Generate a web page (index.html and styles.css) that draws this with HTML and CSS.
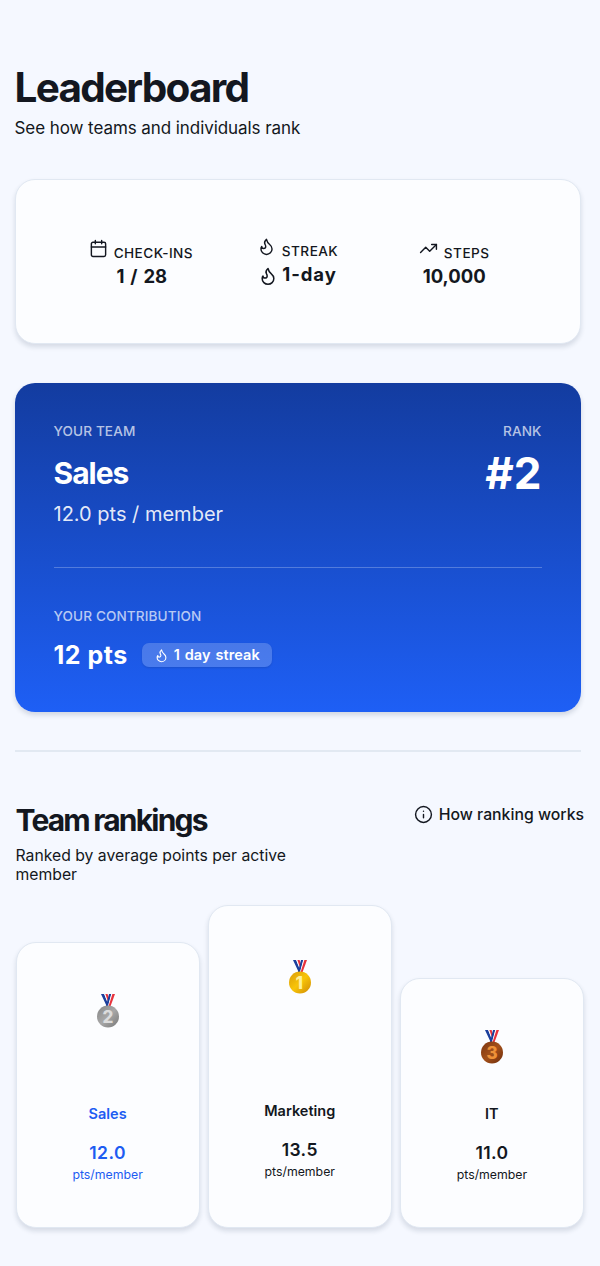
FILE: index.html
```
<!DOCTYPE html>
<html lang="en">
<head>
    <meta charset="UTF-8">
    <meta name="viewport" content="width=device-width, initial-scale=1.0">
    <title>Leaderboard</title>
    <link rel="stylesheet" href="styles.css">
</head>
<body>
    <!-- Shared icons -->
    <svg class="sprite" width="0" height="0">
        <symbol id="flame" viewBox="0 0 24 24">
            <path d="M8.5 14.5A2.5 2.5 0 0 0 11 12c0-1.38-.5-2-1-3-1.072-2.143-.224-4.054 2-6 .5 2.5 2 4.9 4 6.5 2 1.6 3 3.5 3 5.5a7 7 0 1 1-14 0c0-1.153.433-2.294 1-3a2.5 2.5 0 0 0 2.5 2.5z"/>
        </symbol>
        <symbol id="ribbon" viewBox="0 0 24 36">
            <path d="M5 1h3.2l5 12h-2.6z" fill="#1c3f9c"/>
            <path d="M8.2 1h1.4l3.2 8-.8 2z" fill="#ffffff"/>
            <path d="M9.4 1h2.2l1.2 4-1 3z" fill="#e8323c"/>
            <path d="M13 1h2.6l-3.4 12H10z" fill="#1c3f9c"/>
            <path d="M15.2 1h1.4l-3.4 12h-1.2z" fill="#ffffff"/>
            <path d="M16.4 1H19l-4.4 12h-2z" fill="#e8323c"/>
        </symbol>
    </svg>

    <header class="page-header">
        <h1>Leaderboard</h1>
        <p>See how teams and individuals rank</p>
    </header>

    <section class="card stats">
        <div class="stat">
            <div class="stat-label">
                <svg class="icon" viewBox="0 0 24 24"><path d="M8 2v4M16 2v4M3 10h18"/><rect x="3" y="4" width="18" height="18" rx="2"/></svg>
                <span>CHECK-INS</span>
            </div>
            <div class="stat-value spaced">1 / 28</div>
        </div>
        <div class="stat">
            <div class="stat-label">
                <svg class="icon"><use href="#flame"/></svg>
                <span>STREAK</span>
            </div>
            <div class="stat-value with-icon">
                <svg class="icon"><use href="#flame"/></svg>
                <span>1-day</span>
            </div>
        </div>
        <div class="stat">
            <div class="stat-label">
                <svg class="icon" viewBox="0 0 24 24"><path d="M16 7h6v6"/><path d="m22 7-8.5 8.5-5-5L2 17"/></svg>
                <span>STEPS</span>
            </div>
            <div class="stat-value">10,000</div>
        </div>
    </section>

    <section class="team-card">
        <div class="team-top">
            <div>
                <div class="label">YOUR TEAM</div>
                <h2 class="team-name">Sales</h2>
                <div class="team-points">12.0 pts / member</div>
            </div>
            <div class="team-rank">
                <div class="label">RANK</div>
                <div class="rank-number">#2</div>
            </div>
        </div>
        <div class="team-bottom">
            <div class="label">YOUR CONTRIBUTION</div>
            <div class="contribution">
                <span class="points">12 pts</span>
                <span class="badge">
                    <svg class="icon"><use href="#flame"/></svg>
                    <span>1 day streak</span>
                </span>
            </div>
        </div>
    </section>

    <hr class="separator">

    <section class="rankings">
        <div class="rankings-header">
            <div class="rankings-title">
                <h2>Team rankings</h2>
                <p>Ranked by average points per active member</p>
            </div>
            <a class="how-link">
                <svg class="icon" viewBox="0 0 24 24"><circle cx="12" cy="12" r="10"/><path d="M12 16v-4M12 8h.01"/></svg>
                <span>How ranking works</span>
            </a>
        </div>

        <div class="podium">
            <div class="card place second">
                <svg class="medal" viewBox="0 0 24 36">
                    <defs><linearGradient id="silver" x1="0" y1="0" x2="1" y2="1"><stop offset="0" stop-color="#858585"/><stop offset=".5" stop-color="#a8a8a8"/><stop offset="1" stop-color="#777777"/></linearGradient></defs>
                    <use href="#ribbon"/>
                    <circle cx="12" cy="23.5" r="11" fill="url(#silver)"/>
                    <text x="12" y="29.6" fill="#dcdcdc">2</text>
                </svg>
                <div class="place-name">Sales</div>
                <div class="place-score">12.0</div>
                <div class="place-unit">pts/member</div>
            </div>
            <div class="card place first">
                <svg class="medal" viewBox="0 0 24 36">
                    <defs><linearGradient id="gold" x1="0" y1="0" x2="1" y2="1"><stop offset="0" stop-color="#d99a08"/><stop offset=".5" stop-color="#f8c509"/><stop offset="1" stop-color="#cf8a06"/></linearGradient></defs>
                    <use href="#ribbon"/>
                    <circle cx="12" cy="23.5" r="11" fill="url(#gold)"/>
                    <text x="11.3" y="29.6" fill="#fff09a">1</text>
                </svg>
                <div class="place-name">Marketing</div>
                <div class="place-score">13.5</div>
                <div class="place-unit">pts/member</div>
            </div>
            <div class="card place third">
                <svg class="medal" viewBox="0 0 24 36">
                    <defs><linearGradient id="bronze" x1="0" y1="0" x2="1" y2="1"><stop offset="0" stop-color="#7c3510"/><stop offset=".5" stop-color="#a3501a"/><stop offset="1" stop-color="#6f2d0c"/></linearGradient></defs>
                    <use href="#ribbon"/>
                    <circle cx="12" cy="23.5" r="11" fill="url(#bronze)"/>
                    <text x="12" y="29.6" fill="#ee9138">3</text>
                </svg>
                <div class="place-name">IT</div>
                <div class="place-score">11.0</div>
                <div class="place-unit">pts/member</div>
            </div>
        </div>
    </section>
</body>
</html>
```
FILE: styles.css
```
* {
    box-sizing: border-box;
}
body {
    font-family: Inter, sans-serif;
    margin: 0;
    padding: 64px 16px 37px 14.5px;
    background-color: #f5f8ff;
    color: #131720;
}
h1, h2, p {
    margin: 0;
}
.sprite {
    display: block;
}
.icon {
    width: 20px;
    height: 20px;
    flex-shrink: 0;
    fill: none;
    stroke: currentColor;
    stroke-width: 1.8;
    stroke-linecap: round;
    stroke-linejoin: round;
}
.page-header h1 {
    font-size: 40.5px;
    line-height: 47px;
    font-weight: 700;
    letter-spacing: -1.75px;
}
.page-header p {
    margin-top: 5px;
    font-size: 17px;
    line-height: 24px;
    letter-spacing: -0.07px;
}
.card {
    background-color: #fcfdff;
    border: 1.5px solid #e1e8f2;
    border-radius: 20px;
    box-shadow: 0 3px 5px rgba(20, 40, 70, 0.14);
}
.stats {
    display: grid;
    grid-template-columns: repeat(3, 1fr);
    align-items: center;
    width: 566px;
    height: 165px;
    margin-top: 39px;
    padding: 5px 47px 0;
}
.stat {
    display: flex;
    flex-direction: column;
    align-items: center;
}
.stat-label {
    display: flex;
    gap: 6px;
    height: 24px;
    font-size: 13.6px;
    line-height: 20px;
    font-weight: 500;
    letter-spacing: 0.45px;
}
.stat-label .icon {
    width: 19px;
    height: 19px;
}
.stat-label span {
    margin-top: 4px;
}
.stat-value {
    font-size: 18.5px;
    line-height: 27px;
    font-weight: 700;
}
.spaced {
    padding-left: 2px;
    word-spacing: 1.5px;
}
.with-icon {
    display: flex;
    align-items: flex-start;
    gap: 4px;
    height: 31px;
    letter-spacing: 0.9px;
}
.with-icon .icon {
    margin-top: 5px;
}
.team-card {
    width: 566px;
    height: 329px;
    margin-top: 39px;
    padding: 38px 39px;
    border-radius: 20px;
    background: linear-gradient(180deg, #133ca0, #1e5ff5);
    box-shadow: 0 3px 5px rgba(20, 40, 70, 0.16);
    color: #fff;
}
.team-top {
    display: flex;
    justify-content: space-between;
    height: 147px;
    border-bottom: 1px solid rgba(255, 255, 255, 0.25);
}
.label {
    font-size: 13.6px;
    line-height: 20px;
    font-weight: 500;
    letter-spacing: 0.1px;
    color: rgba(255, 255, 255, 0.7);
}
.team-name {
    margin-top: 14px;
    font-size: 30px;
    line-height: 36px;
    font-weight: 700;
    letter-spacing: -1px;
}
.team-points {
    margin-top: 11px;
    font-size: 20px;
    line-height: 24px;
    color: rgba(255, 255, 255, 0.9);
}
.team-rank {
    text-align: right;
}
.rank-number {
    margin-top: 6px;
    font-size: 44px;
    line-height: 52px;
    font-weight: 700;
}
.team-bottom {
    margin-top: 38px;
}
.contribution {
    display: flex;
    align-items: center;
    gap: 14px;
    height: 30px;
    margin-top: 14px;
}
.points {
    font-size: 25px;
    line-height: 30px;
    font-weight: 700;
    letter-spacing: 0.5px;
}
.badge {
    display: flex;
    align-items: center;
    gap: 5px;
    height: 24px;
    padding: 0 12px;
    border-radius: 7px;
    background-color: rgba(255, 255, 255, 0.2);
    box-shadow: 0 1px 2px rgba(0, 0, 0, 0.12);
    font-size: 14.5px;
    font-weight: 600;
    letter-spacing: 0.1px;
    word-spacing: 1px;
}
.badge span {
    margin-top: -2px;
}
.badge .icon {
    width: 15px;
    height: 15px;
}
.separator {
    width: 566px;
    height: 1.5px;
    margin: 38px 0 0;
    border: none;
    background-color: #e2e9f2;
}
.rankings {
    margin: 49.5px 0 0 1px;
}
.rankings-header {
    display: flex;
    justify-content: space-between;
    height: 104px;
}
.rankings-title {
    width: 300px;
}
.rankings-title h2 {
    font-size: 30px;
    line-height: 38px;
    font-weight: 700;
    letter-spacing: -1.8px;
    word-spacing: -1px;
}
.rankings-title p {
    margin-top: 7px;
    font-size: 15.75px;
    line-height: 19.3px;
}
.how-link {
    display: flex;
    align-items: center;
    gap: 6px;
    height: 26px;
    font-size: 15.8px;
    font-weight: 500;
}
.how-link .icon {
    width: 19px;
    height: 19px;
}
.podium {
    display: grid;
    grid-template-columns: repeat(3, 1fr);
    align-items: end;
    gap: 8px;
}
.place {
    display: flex;
    flex-direction: column;
    align-items: center;
    padding-bottom: 44.5px;
}
.first {
    height: 323px;
    padding-top: 53px;
    padding-bottom: 47px;
}
.second {
    height: 286.5px;
    padding-top: 50px;
}
.third {
    height: 250px;
    padding-top: 50px;
}
.medal {
    width: 24px;
    height: 36px;
}
.medal text {
    font-size: 17px;
    font-weight: 800;
    text-anchor: middle;
}
.place-name {
    margin-top: auto;
    font-size: 14.5px;
    line-height: 20px;
    font-weight: 600;
}
.place-score {
    margin-top: 17px;
    font-size: 17.5px;
    line-height: 24px;
    font-weight: 600;
    letter-spacing: 0.4px;
}
.place-unit {
    margin-top: 2px;
    font-size: 12.3px;
    line-height: 16px;
}
.second .place-name,
.second .place-score,
.second .place-unit {
    color: #1d5cf2;
}
```
